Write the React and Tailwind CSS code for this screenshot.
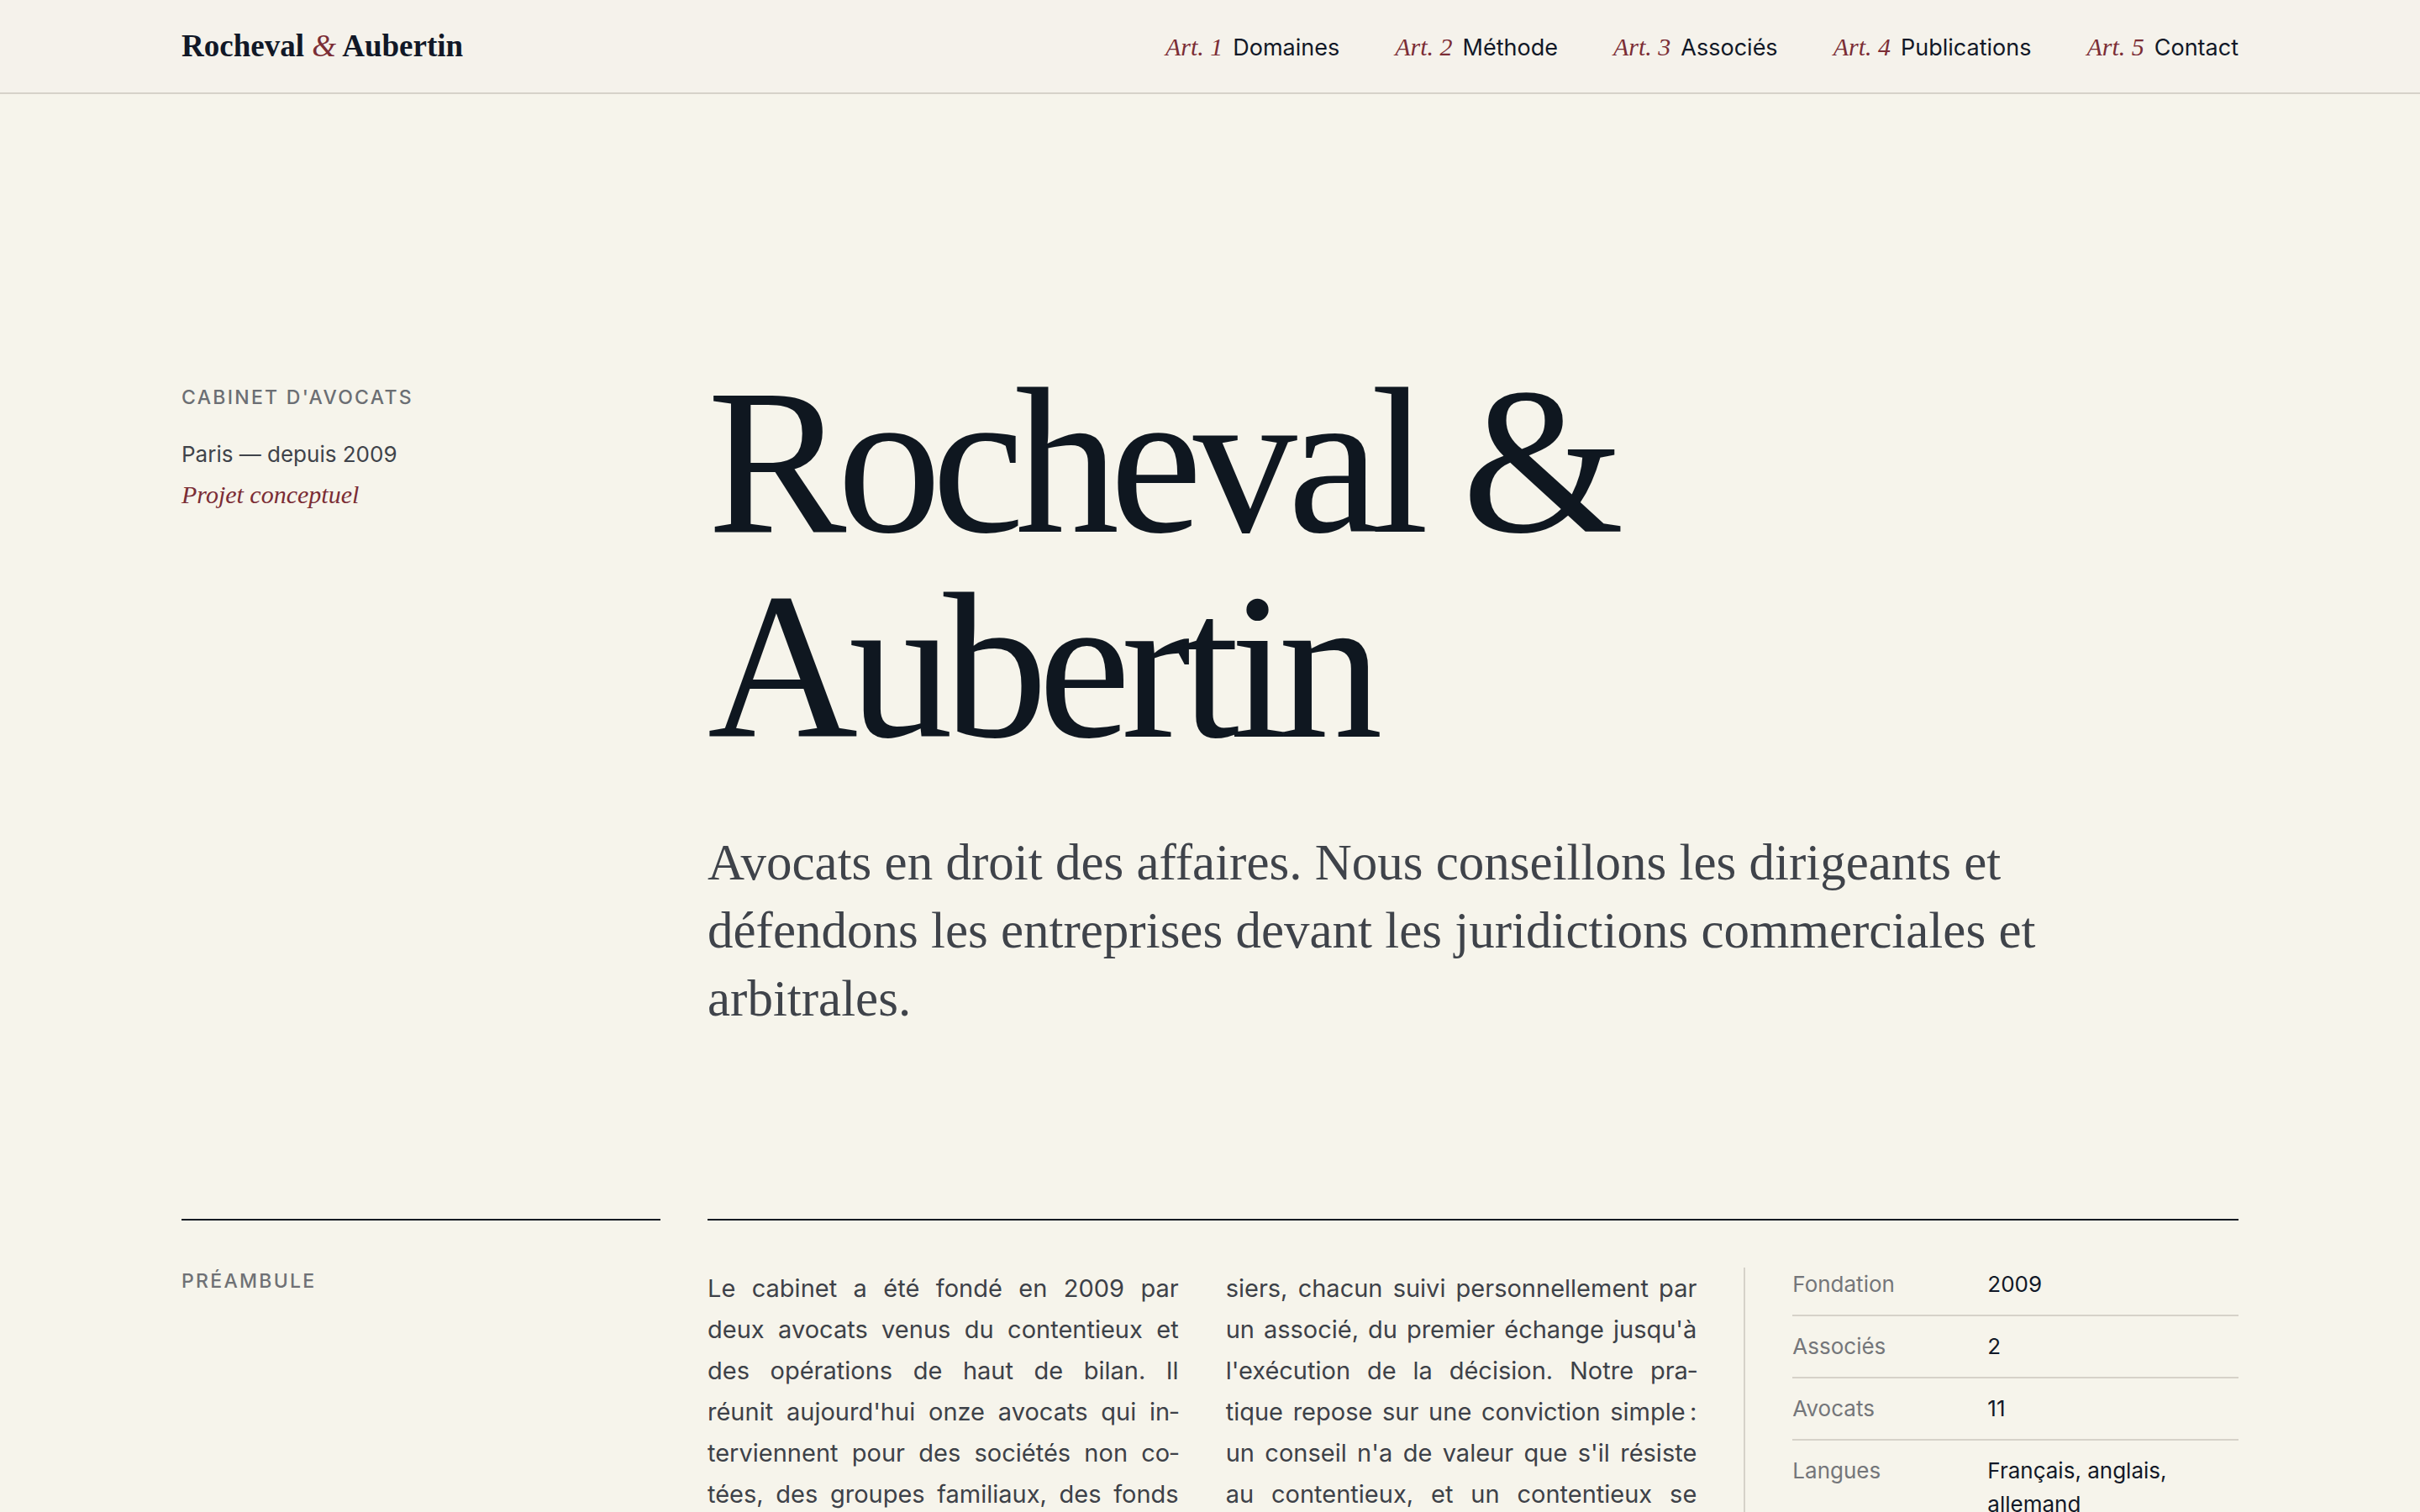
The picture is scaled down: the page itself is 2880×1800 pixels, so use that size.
import React from "react";

const serif = "font-['Liberation_Serif','Times_New_Roman',serif]";

const articles = [
  { n: 1, label: "Domaines" },
  { n: 2, label: "Méthode" },
  { n: 3, label: "Associés" },
  { n: 4, label: "Publications" },
  { n: 5, label: "Contact" },
];

const facts = [
  { label: "Fondation", value: "2009" },
  { label: "Associés", value: "2" },
  { label: "Avocats", value: "11" },
  { label: "Langues", value: "Français, anglais, allemand" },
];

function Header() {
  return (
    <header className="border-b-2 border-[#d6d2c9] bg-[#f5f2eb]">
      <div className="mx-auto flex h-[110px] max-w-[2560px] items-center justify-between px-14">
        <a href="#" className={`${serif} text-[37px] font-semibold text-[#111827]`}>
          Rocheval <span className="font-normal italic text-[#7b2d35]">&amp;</span> Aubertin
        </a>
        <nav className="flex items-center gap-[66px]">
          {articles.map(a => (
            <a key={a.n} href="#" className="flex items-baseline">
              <span className={`${serif} text-[30px] italic text-[#7b2d35]`}>Art. {a.n}</span>
              <span className="ml-3 text-[27px] text-[#111827]">{a.label}</span>
            </a>
          ))}
        </nav>
      </div>
    </header>
  )
}

function Hero() {
  return (
    <section className="grid grid-cols-12 gap-x-14 pt-[316px]">
      <div className="col-span-3 pt-[29px]">
        <p className="text-[23px] font-medium uppercase leading-8 tracking-[0.1em] text-[#6b6e73]">
          Cabinet d'avocats
        </p>
        <p className="mt-[28px] text-[26px] leading-[48px] text-[#3f434a]">Paris — depuis 2009</p>
        <p className={`${serif} text-[30px] italic leading-[48px] text-[#7b2d35]`}>Projet conceptuel</p>
      </div>
      <div className="col-span-9">
        <h1 className={`${serif} text-[248px] leading-[244px] tracking-[-0.045em] text-[#0f1720]`}>
          Rocheval &amp; Aubertin
        </h1>
        <p className={`${serif} mt-[70px] max-w-[1660px] text-[61px] leading-[81px] text-[#3f434a]`}>
          Avocats en droit des affaires. Nous conseillons les dirigeants et défendons les entreprises
          devant les juridictions commerciales et arbitrales.
        </p>
      </div>
    </section>
  )
}

function Preamble() {
  return (
    <section className="mt-[222px] grid grid-cols-12 gap-x-14 pb-48">
      <div className="col-span-3 border-t-2 border-[#151a22] pt-14">
        <h2 className="text-[23px] font-medium uppercase leading-8 tracking-[0.1em] text-[#6f7175]">
          Préambule
        </h2>
      </div>
      <div className="col-span-9 grid grid-cols-[2fr_1fr] gap-x-14 border-t-2 border-[#151a22] pt-14">
        <div className="grid grid-cols-2 gap-x-14 text-justify text-[29px] leading-[49px] [word-spacing:2px] text-[#3d4148]">
          <p>
            Le cabinet a été fondé en 2009 par deux avocats venus du contentieux et des opérations de
            haut de bilan. Il réunit aujourd'hui onze avocats qui in{"\u00AD"}terviennent pour des sociétés
            non co{"\u00AD"}tées, des groupes familiaux, des fonds d'investissement et leurs dirigeants. Il
            traite chaque année une centaine de dos-
          </p>
          <p>
            siers, chacun suivi personnellement par un associé, du premier échange jusqu'à l'exécution
            de la décision. Notre pra{"\u00AD"}tique repose sur une conviction simple{"\u202F"}: un conseil
            n'a de valeur que s'il résiste au contentieux, et un contentieux se prépare dès le premier
            conseil.
          </p>
        </div>
        <aside className="border-l-2 border-[#d6d2c9] pl-14">
          <dl>
            {facts.map((f, i) => (
              <div
                key={f.label}
                className={`grid grid-cols-[232px_1fr] text-[26px] leading-10 ${i === 0 ? "pb-4" : "border-t-2 border-[#d6d2c9] py-4"}`}
              >
                <dt className="text-[#74767a]">{f.label}</dt>
                <dd className="text-[#111827]">{f.value}</dd>
              </div>
            ))}
          </dl>
        </aside>
      </div>
    </section>
  )
}

export default function App() {
  return (
    <div lang="fr" className="min-h-screen bg-[#f6f4eb] font-['Inter','Liberation_Sans',sans-serif] text-[#111827]">
      <Header/>
      <main className="mx-auto max-w-[2560px] px-14">
        <Hero/>
        <Preamble/>
      </main>
    </div>
  )
}
